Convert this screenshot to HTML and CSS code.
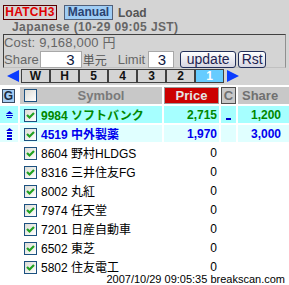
FILE: index.html
```html
<!DOCTYPE html>
<html lang="ja">
<head>
    <meta charset="UTF-8">
    <title>HATCH3</title>
    <link rel="stylesheet" href="styles.css">
</head>
<body>
    <div class="panel">
        <div class="toprow">
            <span class="hatch">HATCH3</span>
            <span class="manual">Manual</span>
            <span class="load">Load</span>
        </div>
        <div class="market">Japanese (10-29 09:05 JST)</div>
        <div class="costbox">
            <div class="cost">Cost: 9,168,000 円</div>
            <div class="shareline">
                <span class="lbl">Share</span>
                <input class="num share-in" value="3">
                <span class="unit">単元</span>
                <span class="lbl limit">Limit</span>
                <input class="num limit-in" value="3">
                <button class="btn update">update</button>
                <button class="btn rst">Rst</button>
            </div>
        </div>
        <div class="tabs">
            <svg class="arrow left" width="12" height="12" viewBox="0 0 12 12"><polygon points="12,0 12,12 0,6" fill="#0a3cff"/></svg>
            <span class="tab">W</span>
            <span class="tab">H</span>
            <span class="tab">5</span>
            <span class="tab">4</span>
            <span class="tab">3</span>
            <span class="tab">2</span>
            <span class="tab on">1</span>
            <svg class="arrow right" width="12" height="12" viewBox="0 0 12 12"><polygon points="0,0 0,12 12,6" fill="#0a3cff"/></svg>
        </div>
    </div>

    <table class="list">
        <colgroup>
            <col class="c-icon"><col class="c-sym"><col class="c-price"><col class="c-c"><col class="c-share">
        </colgroup>
        <tr class="head">
            <td class="icon"><span class="gbtn">G</span></td>
            <td class="sym hcell"><span class="cb"></span><span class="htxt">Symbol</span></td>
            <td class="price-h"><span>Price</span></td>
            <td class="c-h"><span>C</span></td>
            <td class="share-h">Share</td>
        </tr>
        <tr class="hot">
            <td class="icon">
                <svg width="7" height="7" viewBox="0 0 7 7"><polygon points="3.5,0 7,3 0,3" fill="#0000dd"/><rect y="4" width="7" height="1" fill="#0000dd"/><rect x="1" y="6" width="5" height="1" fill="#0000dd"/></svg>
            </td>
            <td class="sym"><span class="cb on"><svg width="11" height="11" viewBox="0 0 11 11"><polyline points="2,5 4.5,7.5 9,3" fill="none" stroke="#21a121" stroke-width="2.2"/></svg></span><span>9984 ソフトバンク</span></td>
            <td class="price">2,715</td>
            <td class="chg"><span class="dash"></span></td>
            <td class="shr">1,200</td>
        </tr>
        <tr class="warm">
            <td class="icon">
                <svg width="7" height="12" viewBox="0 0 7 12"><polygon points="3.5,0 7,3 0,3" fill="#0000dd"/><rect x="1" y="4" width="5" height="2" fill="#0000dd"/><rect x="1" y="7" width="5" height="2" fill="#0000dd"/><rect x="1" y="10" width="5" height="2" fill="#0000dd"/></svg>
            </td>
            <td class="sym"><span class="cb on"><svg width="11" height="11" viewBox="0 0 11 11"><polyline points="2,5 4.5,7.5 9,3" fill="none" stroke="#21a121" stroke-width="2.2"/></svg></span><span>4519 中外製薬</span></td>
            <td class="price">1,970</td>
            <td class="chg"></td>
            <td class="shr">3,000</td>
        </tr>
        <tr>
            <td class="icon"></td>
            <td class="sym"><span class="cb on"><svg width="11" height="11" viewBox="0 0 11 11"><polyline points="2,5 4.5,7.5 9,3" fill="none" stroke="#21a121" stroke-width="2.2"/></svg></span><span>8604 野村HLDGS</span></td>
            <td class="price">0</td><td></td><td></td>
        </tr>
        <tr>
            <td class="icon"></td>
            <td class="sym"><span class="cb on"><svg width="11" height="11" viewBox="0 0 11 11"><polyline points="2,5 4.5,7.5 9,3" fill="none" stroke="#21a121" stroke-width="2.2"/></svg></span><span>8316 三井住友FG</span></td>
            <td class="price">0</td><td></td><td></td>
        </tr>
        <tr>
            <td class="icon"></td>
            <td class="sym"><span class="cb on"><svg width="11" height="11" viewBox="0 0 11 11"><polyline points="2,5 4.5,7.5 9,3" fill="none" stroke="#21a121" stroke-width="2.2"/></svg></span><span>8002 丸紅</span></td>
            <td class="price">0</td><td></td><td></td>
        </tr>
        <tr>
            <td class="icon"></td>
            <td class="sym"><span class="cb on"><svg width="11" height="11" viewBox="0 0 11 11"><polyline points="2,5 4.5,7.5 9,3" fill="none" stroke="#21a121" stroke-width="2.2"/></svg></span><span>7974 任天堂</span></td>
            <td class="price">0</td><td></td><td></td>
        </tr>
        <tr>
            <td class="icon"></td>
            <td class="sym"><span class="cb on"><svg width="11" height="11" viewBox="0 0 11 11"><polyline points="2,5 4.5,7.5 9,3" fill="none" stroke="#21a121" stroke-width="2.2"/></svg></span><span>7201 日産自動車</span></td>
            <td class="price">0</td><td></td><td></td>
        </tr>
        <tr>
            <td class="icon"></td>
            <td class="sym"><span class="cb on"><svg width="11" height="11" viewBox="0 0 11 11"><polyline points="2,5 4.5,7.5 9,3" fill="none" stroke="#21a121" stroke-width="2.2"/></svg></span><span>6502 東芝</span></td>
            <td class="price">0</td><td></td><td></td>
        </tr>
        <tr>
            <td class="icon"></td>
            <td class="sym"><span class="cb on"><svg width="11" height="11" viewBox="0 0 11 11"><polyline points="2,5 4.5,7.5 9,3" fill="none" stroke="#21a121" stroke-width="2.2"/></svg></span><span>5802 住友電工</span></td>
            <td class="price">0</td><td></td><td></td>
        </tr>
    </table>

    <div class="footer">2007/10/29 09:05:35 breakscan.com</div>
</body>
</html>
```

FILE: styles.css
```css
html, body {
    margin: 0;
    padding: 0;
    overflow: hidden;
}
body {
    width: 289px;
    height: 285px;
    background: #fff;
    font-family: "Liberation Sans", "Noto Sans CJK JP", sans-serif;
    font-size: 12px;
    color: #000;
}

/* top control panel */
.panel {
    background: #d4d4d4;
    height: 85px;
    padding: 5px 3px 0 3px;
    box-sizing: border-box;
}
.toprow {
    display: flex;
    align-items: center;
    height: 15px;
}
.hatch {
    width: 54px;
    height: 15px;
    box-sizing: border-box;
    border: 1px solid #5a0000;
    color: #e00000;
    font-weight: bold;
    text-align: center;
    line-height: 13px;
    letter-spacing: 0.3px;
}
.manual {
    margin-left: 7px;
    width: 49px;
    height: 15px;
    box-sizing: border-box;
    border: 1px solid #50607a;
    background: #9fcdf5;
    color: #2a4270;
    font-weight: bold;
    text-align: center;
    line-height: 13px;
}
.load {
    margin-left: 5px;
    color: #555;
    font-weight: bold;
}
.market {
    height: 13px;
    line-height: 13px;
    margin-top: 1px;
    padding-left: 9px;
    color: #666;
    font-weight: bold;
    letter-spacing: 0.4px;
}
.costbox {
    height: 34px;
    box-sizing: border-box;
    border-top: 1px solid #404040;
    border-left: 1px solid #404040;
    border-right: 1px solid #909090;
    border-bottom: 1px solid #c0c0c0;
    padding: 1px 0 0 0;
}
.cost {
    height: 13px;
    line-height: 13px;
    color: #666;
    font-size: 13px;
    letter-spacing: 0.2px;
}
.shareline {
    display: flex;
    align-items: center;
    height: 18px;
    margin-top: 1px;
}
.lbl {
    color: #666;
    font-size: 13px;
}
.num {
    height: 17px;
    box-sizing: border-box;
    border: 1px solid #a8a8a8;
    background: #fff;
    font-family: "Liberation Sans", sans-serif;
    font-size: 15px;
    color: #101840;
    text-align: right;
    padding: 0 6px 0 0;
    margin: 0;
}
.share-in {
    width: 42px;
    margin-left: 1px;
}
.unit {
    margin-left: 1px;
    color: #555;
    font-size: 12px;
}
.limit {
    margin-left: 11px;
}
.limit-in {
    width: 26px;
    margin-left: 3px;
    padding-right: 7px;
}
.btn {
    height: 17px;
    box-sizing: border-box;
    border: 1px solid #24305a;
    border-radius: 3px;
    background: linear-gradient(#ffffff, #d6d6e2);
    color: #1e1e50;
    font-family: "Liberation Sans", sans-serif;
    font-size: 14px;
    line-height: 14px;
    padding: 0;
    margin: 0;
}
.update {
    width: 56px;
    margin-left: 6px;
}
.rst {
    width: 28px;
    margin-left: 2px;
}

/* page tabs */
.tabs {
    display: flex;
    align-items: center;
    height: 14px;
    margin-top: 1px;
}
.arrow.left {
    margin-left: 4px;
    margin-right: 2px;
}
.arrow.right {
    margin-left: 3px;
}
.tab {
    width: 29px;
    height: 14px;
    box-sizing: border-box;
    border: 1px solid #404040;
    text-align: center;
    font-weight: bold;
    line-height: 12px;
    color: #111;
}
.tab.on {
    background: #66ccff;
    color: #fff;
}

/* symbol list */
.list {
    border-collapse: separate;
    border-spacing: 2px;
    table-layout: fixed;
    width: 293px;
    margin: 0 0 0 -2px;
}
.c-icon { width: 18px; }
.c-sym { width: 142px; }
.c-price { width: 55px; }
.c-c { width: 15px; }
.c-share { width: 51px; }
.list td {
    padding: 0;
    height: 17px;
    white-space: nowrap;
    overflow: hidden;
}
.icon {
    text-align: center;
}
.icon svg {
    display: block;
    margin: 0 auto;
}
.sym, .hcell {
    padding-left: 4px !important;
}
.sym span {
    vertical-align: middle;
}
.cb {
    display: inline-block;
    width: 13px;
    height: 13px;
    box-sizing: border-box;
    border: 1px solid #1c5180;
    background: linear-gradient(135deg, #dcdcd6, #ffffff);
    margin-right: 4px;
    position: relative;
    top: 1px;
}
.cb svg {
    display: block;
}
.price {
    text-align: right;
    padding-right: 2px !important;
}
.shr {
    text-align: right;
    padding-right: 8px !important;
}

.head td {
    font-weight: bold;
}
.gbtn {
    display: block;
    width: 13px;
    height: 14px;
    box-sizing: border-box;
    margin-left: 2px;
    border: 1px solid #3a4a60;
    background: #a6cdf2;
    color: #1a2a40;
    text-align: center;
    line-height: 12px;
}
.hcell {
    background: #c8c8c8;
}
.hcell .cb {
    top: 0;
}
.hcell .htxt {
    display: inline-block;
    width: 120px;
    text-align: center;
    color: #7a7a7a;
    font-size: 13px;
}
.price-h {
    background: #fff;
}
.price-h span {
    display: block;
    height: 17px;
    box-sizing: border-box;
    border: 1px solid #9a9a9a;
    background: #cc0000;
    color: #e4e4e4;
    font-size: 13px;
    line-height: 15px;
    text-align: center;
}
.c-h span {
    display: block;
    height: 17px;
    box-sizing: border-box;
    border: 1px solid #505050;
    background: #c8c8c8;
    color: #707070;
    font-size: 13px;
    line-height: 15px;
    text-align: center;
}
.share-h {
    background: #c8c8c8;
    color: #707070;
    font-size: 13px;
    padding-left: 4px !important;
}

.hot td {
    background: #a6ffff;
    color: #008800;
    font-weight: bold;
}
.warm td {
    background: #e0ffff;
    color: #0000ee;
    font-weight: bold;
}
.dash {
    display: block;
    width: 5px;
    height: 2px;
    margin: 9px 0 0 5px;
    background: #0000cc;
}

.footer {
    margin-top: -4px;
    padding-right: 4px;
    text-align: right;
    line-height: 12px;
    font-size: 11px;
}
```
